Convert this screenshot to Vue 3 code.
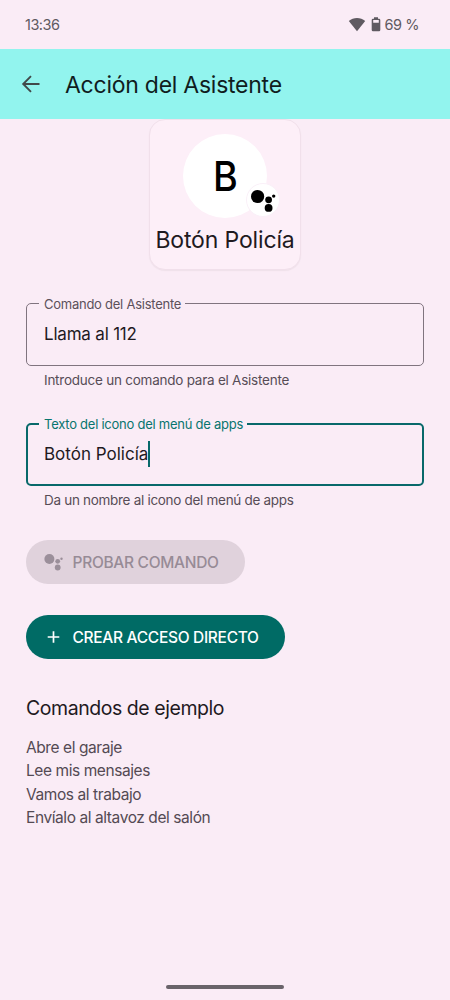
<script setup>
import { ref } from 'vue'

const command = ref('Llama al 112')
const label = ref('Botón Policía')
const examples = [
  'Abre el garaje',
  'Lee mis mensajes',
  'Vamos al trabajo',
  'Envíalo al altavoz del salón',
]
</script>

<template>
  <div class="screen">
    <div class="status">
      <span class="clock">13:36</span>
      <svg class="wifi" width="18" height="15" viewBox="0 0 18 15"><path d="M.8 4.1C5.4.1 12.600.1 17.200 4.100L9 14.200Z" fill="#5f5a61" /></svg>
      <svg class="battery" width="10" height="15" viewBox="0 0 10 15">
        <path fill-rule="evenodd" fill="#5f5a61" d="M3 .3h4v1.400h1q1.300 0 1.300 1.300v10q0 1.300-1.300 1.300H2Q.7 14.300.7 13V3Q.7 1.700 2 1.700h1ZM2.200 3.100v2.600h5.600V3.100Z" />
      </svg>
      <span class="percent">69 %</span>
    </div>

    <header class="bar">
      <svg width="20" height="20" viewBox="0 0 20 20" fill="none" stroke="#41494a" stroke-width="1.9">
        <path d="M18.500 10H2.500M10 2.200 2.200 10 10 17.800" />
      </svg>
      <h1>Acción del Asistente</h1>
    </header>

    <main>
      <div class="card">
        <div class="avatar">
          <span>B</span>
          <svg class="badge" width="34" height="34" viewBox="0 0 34 34">
            <circle cx="17" cy="17" r="16.500" fill="#fff" stroke="#faf0f8" stroke-width="1" />
            <circle cx="11.600" cy="13.500" r="6.600" />
            <circle cx="22.600" cy="16.800" r="3.400" />
            <circle cx="22.600" cy="24.900" r="3.900" />
            <circle cx="27.700" cy="13.100" r="1.700" />
          </svg>
        </div>
        <div class="card-name">{{ label }}</div>
      </div>

      <section class="field">
        <div class="outline">
          <span class="caption">Comando del Asistente</span>
          <span class="value tight">{{ command }}</span>
        </div>
        <p>Introduce un comando para el Asistente</p>
      </section>

      <section class="field">
        <div class="outline active">
          <span class="caption">Texto del icono del menú de apps</span>
          <span class="value">{{ label }}</span><i class="caret"></i>
        </div>
        <p class="tighter">Da un nombre al icono del menú de apps</p>
      </section>

      <button class="disabled">
        <svg width="20" height="18" viewBox="0 0 20 18" fill="#9b8f9a">
          <circle cx="5.400" cy="6" r="5" /><circle cx="13.700" cy="8.300" r="2.400" />
          <circle cx="13.700" cy="14.500" r="2.900" /><circle cx="17.500" cy="5.700" r="1.200" />
        </svg>
        <span>PROBAR COMANDO</span>
      </button>
      <button class="primary">
        <svg width="20" height="18" viewBox="0 0 20 18" stroke="#fff" stroke-width="1.700"><path d="M3.700 9h11.600M9.500 3.200v11.600" /></svg>
        <span>CREAR ACCESO DIRECTO</span>
      </button>

      <h2>Comandos de ejemplo</h2>
      <ul>
        <li v-for="text in examples" :key="text">{{ text }}</li>
      </ul>
    </main>
    <div class="home"></div>
  </div>
</template>

<style>
body { margin: 0; background: #faecf6; }
</style>

<style scoped>
.screen {
  box-sizing: border-box; width: 450px; height: 1000px; overflow: hidden;
  display: flex; flex-direction: column; background: #faecf6; color: #1f1a1f;
  font-family: Inter, "Liberation Sans", sans-serif; white-space: nowrap;
}
h1, h2, p, ul { margin: 0; padding: 0; font-weight: 400; }
svg { flex: none; }
.status { height: 49px; display: flex; align-items: center; padding: 0 31px 0 25px; box-sizing: border-box; font-size: 14.500px; color: #5f5a61; }
.clock { flex: 1; letter-spacing: -.5px; }
.percent { letter-spacing: -.45px; }
.wifi { margin-right: 5px; }
.battery { margin-right: 4px; }
.bar { height: 70px; flex: none; display: flex; align-items: center; gap: 24px; padding-left: 21px; background: #92f4ee; color: #101d1e; }
.bar h1 { font-size: 23px; line-height: 30px; letter-spacing: -.25px; padding-top: 1px; }
main { flex: 1; display: flex; flex-direction: column; align-items: flex-start; padding: 0 26px; }
.card {
  align-self: center; box-sizing: border-box; width: 152px; height: 151px; border: 1px solid #f1e0eb; border-radius: 16px;
  background: #fdeff8; box-shadow: 0 1px 1px #efe1ea; display: flex; flex-direction: column; align-items: center; padding-top: 14px;
}
.avatar { position: relative; width: 84px; height: 84px; border-radius: 50%; background: #fff; display: flex; justify-content: center; align-items: center; color: #000; }
.avatar span { font-size: 41px; font-weight: 500; line-height: 84px; transform: scaleX(.92); }
.badge { position: absolute; left: 63px; top: 49px; }
.card-name { font-size: 23px; line-height: 30px; margin-top: 7px; letter-spacing: -.15px; }
.field { width: 100%; margin-top: 33px; height: 87px; }
.outline { position: relative; box-sizing: border-box; height: 63px; border: 1px solid #80747f; border-radius: 5px; padding: 0 0 2px 17px; display: flex; align-items: center; font-size: 17px; }
.outline.active { border: 2px solid #08696a; padding-left: 16px; }
.tight { letter-spacing: -.2px; }
.caption { position: absolute; left: 12px; top: -9px; line-height: 18px; padding: 0 4px 0 5px; background: #faecf6; font-size: 13px; letter-spacing: -.25px; color: #5c515b; }
.active .caption { left: 11px; top: -10px; color: #08756e; }
.caret { width: 2px; height: 26px; background: #08696a; }
.field p { padding-left: 18px; margin-top: 5px; font-size: 13.500px; line-height: 18px; letter-spacing: -.24px; color: #574c56; }
.field p.tighter { letter-spacing: -.3px; }
button { border: 0; border-radius: 22px; height: 44px; display: flex; align-items: center; gap: 8.500px; padding: 0 0 0 18px; font: 500 15.500px Inter, "Liberation Sans", sans-serif; letter-spacing: -.3px; }
.disabled { width: 219px; margin-top: 30px; background: #e0d2dc; color: #978b96; }
.primary { width: 259px; margin-top: 31px; background: #006b65; color: #fff; }
h2 { font-size: 19.500px; line-height: 26px; margin-top: 36px; letter-spacing: -.45px; }
ul { list-style: none; margin-top: 14.600px; font-size: 15.500px; line-height: 23.500px; letter-spacing: -.42px; color: #544a53; }
.home { position: absolute; left: 166px; top: 985px; width: 118px; height: 4px; border-radius: 2px; background: #69636a; }
</style>
